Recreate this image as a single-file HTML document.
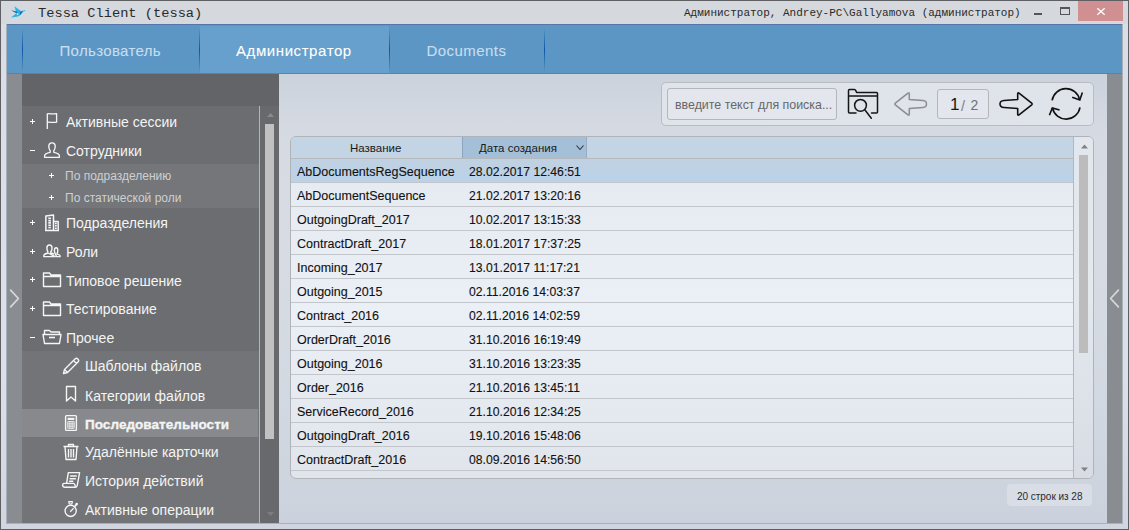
<!DOCTYPE html>
<html><head><meta charset="utf-8">
<style>
*{margin:0;padding:0;box-sizing:border-box}
html,body{width:1129px;height:530px;overflow:hidden}
body{position:relative;background:#d3d7de;font-family:"Liberation Sans",sans-serif}
.a{position:absolute}
.t{position:absolute;white-space:pre;line-height:1}
#frame{left:0;top:0;width:1129px;height:530px;border:1px solid #5f6064;background:linear-gradient(#d8dde7,#dbe0ea 70%,#d0d5df)}
#titlebar{left:1px;top:1px;width:1127px;height:23px;background:#d5d8dc}
#tabs{left:7px;top:24px;width:1115px;height:50px;background:#5b96c4;border-top:1px solid #5576a6}
.tab{position:absolute;top:1px;height:48px;color:#fff;font-size:15.6px}
.sep{position:absolute;top:3px;width:1px;height:44px;background:linear-gradient(rgba(16,90,170,0),#0b58a6 50%,rgba(16,90,170,0))}
#leftstrip{left:7px;top:74px;width:15px;height:449px;background:#898c90}
#rightstrip{left:1107px;top:74px;width:15px;height:449px;background:#898c90}
#sidebar{left:22px;top:74px;width:257px;height:449px;background:#6b6d70}
#sbhead{left:22px;top:74px;width:257px;height:32px;background:#636467}
#main{left:279px;top:74px;width:828px;height:449px;background:linear-gradient(#ccd2dc 0%,#d6dbe3 14%,#d7dce4 40%,#d2d8e1 75%,#ccd2dd 100%)}
.item{position:absolute;left:22px;width:236px;height:29px}
.lbl{position:absolute;color:#f4f4f4;font-size:14px;white-space:pre;line-height:1}
.pm{position:absolute;color:#f0f0f0;font-size:12px;line-height:1}
svg{position:absolute;overflow:visible}
.row{position:absolute;left:291px;width:782px;height:24px;border-bottom:1px solid #c2c5ca;background:#e7ebf2}
#tabs::after{content:"";position:absolute;left:0;top:48px;width:1115px;height:1px;background:#5484b0}
.c1{position:absolute;left:6px;top:6.5px;font-size:12.5px;color:#111;-webkit-text-stroke:0.1px #111;white-space:pre;line-height:1}
.c2{position:absolute;left:178px;top:6.5px;font-size:12.2px;color:#111;-webkit-text-stroke:0.1px #111;white-space:pre;line-height:1}
</style></head><body>
<div id="frame" class="a"></div>
<div id="titlebar" class="a"></div>
<div class="a" style="left:6px;top:24px;width:1117px;height:500px;border:1px solid #aab0b7;border-top:none"></div>
<!-- bird icon -->
<svg style="left:8px;top:3px" width="20" height="18" viewBox="0 0 20 18">
<path d="M6.4 3.2 L12.6 7.8 L11.4 12.6 L8.2 9.2 Z" fill="#2bb3e6"/>
<path d="M3 7.2 L9.2 8.4 L9.6 11 Z" fill="#1f6fb0"/>
<path d="M11.5 8.6 L15.6 7.6 L17.3 7 L17.1 7.9 L15.2 8.4 L11.5 13 Z" fill="#2bb3e6"/>
<path d="M12.4 8.5 L15.3 8.2 L11.4 12.8 Z" fill="#1a6aad"/>
<path d="M8.9 9.8 L11.4 12.8 L10 13.4 L3 14.6 Z" fill="#2ab0e4"/>
<circle cx="9.5" cy="11.1" r="0.8" fill="#e8f6fd"/>
</svg>
<div class="t" style="left:38px;top:6.5px;font-family:'Liberation Mono',monospace;font-size:13.7px;color:#2a2a2a">Tessa Client (tessa)</div>
<div class="t" style="left:684px;top:7.8px;font-family:'Liberation Mono',monospace;font-size:11px;color:#2a2a2a">Администратор, Andrey-PC\Gallyamova (администратор)</div>
<!-- window controls -->
<div class="a" style="left:1034px;top:13px;width:8px;height:2px;background:#555"></div>
<div class="a" style="left:1060px;top:7px;width:10px;height:8px;border:1px solid #555;border-top-width:2px"></div>
<div class="a" style="left:1078px;top:1px;width:45px;height:20px;background:#d08f91"></div>
<svg style="left:1097px;top:8px" width="8" height="7" viewBox="0 0 8 7"><path d="M0.3 0.2 L7.7 6.8 M7.7 0.2 L0.3 6.8" stroke="#fff" stroke-width="1.3"/></svg>

<div id="tabs" class="a">
  <div class="sep" style="left:15px"></div>
  <div class="a" style="left:193px;top:1px;width:189px;height:48px;background:#67a0cc"></div>
  <div class="sep" style="left:192px"></div>
  <div class="sep" style="left:382px"></div>
  <div class="sep" style="left:537px"></div>
  <div class="t" style="left:52.5px;top:17.6px;font-size:15px;letter-spacing:0.34px;color:#c8def0;-webkit-text-stroke:0.1px #c8def0">Пользователь</div>
  <div class="t" style="left:229px;top:17.6px;font-size:15px;letter-spacing:0.58px;color:#ffffff;-webkit-text-stroke:0.08px #fff">Администратор</div>
  <div class="t" style="left:419.5px;top:17.6px;font-size:15px;letter-spacing:0.45px;color:#c8def0;-webkit-text-stroke:0.1px #c8def0">Documents</div>
</div>

<div id="leftstrip" class="a"></div>
<svg style="left:9px;top:289px" width="11" height="20" viewBox="0 0 11 20"><path d="M1.6 1.2 L9.4 9.5 L1.6 17.8" stroke="#d6d8db" stroke-width="1.7" stroke-linecap="round" stroke-linejoin="round" fill="none"/></svg>
<div id="rightstrip" class="a"></div>
<svg style="left:1109px;top:289px" width="11" height="20" viewBox="0 0 11 20"><path d="M9.4 1.2 L1.6 9.5 L9.4 17.8" stroke="#d6d8db" stroke-width="1.7" stroke-linecap="round" stroke-linejoin="round" fill="none"/></svg>

<div id="sidebar" class="a"></div>
<div id="sbhead" class="a"></div>
<div class="a" style="left:22px;top:164px;width:237px;height:44px;background:#747679"></div>
<div class="a" style="left:22px;top:351px;width:237px;height:172px;background:#727477"></div>
<div class="a" style="left:22px;top:409px;width:236px;height:28px;background:#87898c"></div>
<div class="a" style="left:259px;top:106px;width:1px;height:417px;background:#b4b5b7"></div>
<div class="a" style="left:260px;top:106px;width:19px;height:417px;background:#68696c"></div>
<div class="a" style="left:265px;top:124px;width:9px;height:315px;background:#c1c1c1"></div>
<svg style="left:267px;top:113px" width="7" height="4" viewBox="0 0 7 4"><path d="M0 4 L3.5 0 L7 4 Z" fill="#8a8b8d"/></svg>
<svg style="left:267px;top:512px" width="7" height="4" viewBox="0 0 7 4"><path d="M0 0 L3.5 4 L7 0 Z" fill="#7d7e80"/></svg>

<!-- sidebar labels -->
<div class="lbl" style="left:66px;top:115px">Активные сессии</div>
<div class="lbl" style="left:66px;top:144px">Сотрудники</div>
<div class="lbl" style="left:65px;top:170px;font-size:12px;color:#cfd0d2">По подразделению</div>
<div class="lbl" style="left:65px;top:192px;font-size:12px;color:#cfd0d2">По статической роли</div>
<div class="lbl" style="left:66px;top:216px">Подразделения</div>
<div class="lbl" style="left:66px;top:245px">Роли</div>
<div class="lbl" style="left:66px;top:274px">Типовое решение</div>
<div class="lbl" style="left:66px;top:302px">Тестирование</div>
<div class="lbl" style="left:66px;top:331px">Прочее</div>
<div class="lbl" style="left:85px;top:359px">Шаблоны файлов</div>
<div class="lbl" style="left:85px;top:388.5px">Категории файлов</div>
<div class="lbl" style="left:85px;top:418px;font-weight:bold;font-size:13.5px;letter-spacing:0.05px;-webkit-text-stroke:0.35px #f4f4f4">Последовательности</div>
<div class="lbl" style="left:85px;top:445px">Удалённые карточки</div>
<div class="lbl" style="left:85px;top:474px">История действий</div>
<div class="lbl" style="left:85px;top:503px">Активные операции</div>

<!-- plus/minus -->
<div class="a" style="left:30px;top:121px;width:5px;height:1px;background:#fff"></div><div class="a" style="left:32px;top:119px;width:1px;height:5px;background:#fff"></div>
<div class="a" style="left:30px;top:150px;width:5px;height:1px;background:#fff"></div>
<div class="a" style="left:49px;top:175px;width:5px;height:1px;background:#fff"></div><div class="a" style="left:51px;top:173px;width:1px;height:5px;background:#fff"></div>
<div class="a" style="left:49px;top:197px;width:5px;height:1px;background:#fff"></div><div class="a" style="left:51px;top:195px;width:1px;height:5px;background:#fff"></div>
<div class="a" style="left:30px;top:222px;width:5px;height:1px;background:#fff"></div><div class="a" style="left:32px;top:220px;width:1px;height:5px;background:#fff"></div>
<div class="a" style="left:30px;top:251px;width:5px;height:1px;background:#fff"></div><div class="a" style="left:32px;top:249px;width:1px;height:5px;background:#fff"></div>
<div class="a" style="left:30px;top:279px;width:5px;height:1px;background:#fff"></div><div class="a" style="left:32px;top:277px;width:1px;height:5px;background:#fff"></div>
<div class="a" style="left:30px;top:308px;width:5px;height:1px;background:#fff"></div><div class="a" style="left:32px;top:306px;width:1px;height:5px;background:#fff"></div>
<div class="a" style="left:30px;top:337px;width:5px;height:1px;background:#fff"></div>
<!-- flag -->
<svg style="left:44px;top:112px" width="16" height="18" viewBox="0 0 16 18" fill="none" stroke="#f6f6f6" stroke-width="1.3" stroke-linejoin="round">
<path d="M3.3 17 V1.8 C6 1.2 8 2.6 12.6 1.6 V10.2 C8.5 11 6 9.8 3.3 10.3"/></svg>
<!-- person -->
<svg style="left:43px;top:141px" width="18" height="18" viewBox="0 0 18 18" fill="none" stroke="#f6f6f6" stroke-width="1.35" stroke-linejoin="round">
<path d="M9 1.8 C6.7 1.8 5.6 3.6 5.8 6 C6 7.8 6.6 9.1 7.3 10 L7.1 11.4 C4.2 12 1.7 13 1.6 14.8 V16.3 H16.4 V14.8 C16.3 13 13.8 12 10.9 11.4 L10.7 10 C11.4 9.1 12 7.8 12.2 6 C12.4 3.6 11.3 1.8 9 1.8 Z"/></svg>
<!-- building -->
<svg style="left:42px;top:212px" width="20" height="22" viewBox="0 0 20 22" fill="none" stroke="#f6f6f6" stroke-width="1.5" stroke-linejoin="round">
<path d="M3.85 18.6 V4.1 L11.5 3.1 V18.6 Z M11.5 9.6 H16.2 V18.6 H11.5 M3 18.6 H17"/>
<path d="M7.6 5.5 V17.2" stroke-width="2.6" stroke-dasharray="1.6 0.7"/>
<path d="M13.85 10.8 V17.2" stroke-width="1.8" stroke-dasharray="1.5 0.8"/></svg>
<!-- roles -->
<svg style="left:40px;top:240px" width="24" height="22" viewBox="0 0 24 22" fill="none" stroke="#f6f6f6" stroke-width="1.4" stroke-linejoin="round">
<path d="M8.2 12 C7.3 11 6.9 9.6 6.9 8 C6.9 6 7.9 5 9.45 5 C11 5 12 6 12 8 C12 9.6 11.6 11 10.7 12 L10.8 13 C12 13.3 13.2 13.7 14.1 14.2 M15.2 16.65 H3.85 V15.5 C3.9 14.3 6 13.5 8.1 13 Z"/>
<path d="M15.2 13.5 C14.7 12.8 14.4 11.8 14.4 10.5 C14.4 8.8 15.1 7.75 16.1 7.75 C17.1 7.75 17.8 8.8 17.8 10.5 C17.8 11.8 17.5 12.8 17 13.5 L17.1 14.1 C18.8 14.5 20 15 20.05 15.8 V16.65 H16.3 C16.2 15.2 15.6 14.3 15.1 14 Z"/></svg>
<!-- folders -->
<svg style="left:42px;top:271px" width="20" height="17" viewBox="0 0 20 17" fill="none" stroke="#f6f6f6" stroke-width="1.4" stroke-linejoin="round">
<path d="M1.5 15.5 V2 H7.5 L9 4 H18.5 V15.5 Z M1.5 5.5 H18.5"/></svg>
<svg style="left:42px;top:300px" width="20" height="17" viewBox="0 0 20 17" fill="none" stroke="#f6f6f6" stroke-width="1.4" stroke-linejoin="round">
<path d="M1.5 15.5 V2 H7.5 L9 4 H18.5 V15.5 Z M1.5 5.5 H18.5"/></svg>
<svg style="left:42px;top:329px" width="20" height="16" viewBox="0 0 20 16" fill="none" stroke="#f6f6f6" stroke-width="1.4" stroke-linejoin="round">
<path d="M2.5 5 V1.5 H7.5 L9 3 H17.5 V5 M1 5.5 H19 L17.5 14.5 H2.5 Z"/><path d="M7 8.5 H13" stroke-width="1.6"/></svg>
<!-- pencil -->
<svg style="left:62px;top:357px" width="18" height="18" viewBox="0 0 18 18" fill="none" stroke="#f6f6f6" stroke-width="1.4" stroke-linejoin="round">
<path d="M1.5 16.5 L2.5 12.5 L13 2 C13.8 1.2 15 1.2 15.8 2 L16 2.2 C16.8 3 16.8 4.2 16 5 L5.5 15.5 Z M11.5 3.5 L14.5 6.5 M2.5 12.5 L5.5 15.5"/></svg>
<!-- bookmark -->
<svg style="left:65px;top:385px" width="12" height="18" viewBox="0 0 12 18" fill="none" stroke="#f6f6f6" stroke-width="1.4" stroke-linejoin="round">
<path d="M1.5 1.5 H10.5 V16 L6 12 L1.5 16 Z"/></svg>
<!-- calculator -->
<svg style="left:64px;top:414px" width="14" height="18" viewBox="0 0 14 18" fill="none" stroke="#f6f6f6" stroke-width="1.4" stroke-linejoin="round">
<rect x="1.6" y="1.6" width="10.8" height="14.8" rx="1"/><path d="M3.6 4.9 H10.4" stroke-width="2.1"/>
<path d="M3.8 7.6 H10.2 V14.3 H3.8 Z M3.8 9.9 H10.2 M3.8 12.1 H10.2 M5.9 7.6 V14.3 M8.1 7.6 V14.3" stroke-width="0.9"/></svg>
<!-- trash -->
<svg style="left:62px;top:443px" width="18" height="18" viewBox="0 0 18 18" fill="none" stroke="#f6f6f6" stroke-width="1.4" stroke-linejoin="round">
<path d="M1.5 3.5 H16.5 M6.5 3.5 V1.5 H11.5 V3.5 M3 3.5 L4 16.5 H14 L15 3.5 M6.5 6 V14.5 M9 6 V14.5 M11.5 6 V14.5"/></svg>
<!-- history scroll -->
<svg style="left:58px;top:468px" width="26" height="24" viewBox="0 0 26 24" fill="none" stroke="#f6f6f6" stroke-width="1.4" stroke-linejoin="round" stroke-linecap="round">
<path d="M8.6 15.4 L10.3 4.6 H21.6 L19.2 17.6 C18.9 18.8 18.2 19.3 17.2 19.3 H7.2 C5.6 19.3 4.6 18.3 4.6 17 C4.6 16 5.2 15.4 6.2 15.4 H15.3 C16.1 15.4 16.7 16.1 17 17.1 L17.6 19.2"/>
<path d="M12.6 8 H18.3 M12.1 10.7 H17.4 M11.6 13.3 H14.8"/></svg>
<!-- stopwatch -->
<svg style="left:63px;top:500px" width="17" height="18" viewBox="0 0 17 18" fill="none" stroke="#f6f6f6" stroke-width="1.4" stroke-linejoin="round">
<circle cx="7.65" cy="10.85" r="5.6"/><path d="M5.7 1.6 H9.4 L8.8 4 H6.3 Z" stroke-width="1.2"/><path d="M11.6 6.6 L13.4 4.6" stroke-width="1.6"/><circle cx="13.7" cy="4.1" r="1.3" fill="#f6f6f6" stroke="none"/><path d="M7.2 11.7 L10.6 8.3" stroke-width="1.3"/></svg>
<div id="main" class="a"></div>

<!-- toolbar -->
<div class="a" style="left:661px;top:82px;width:433px;height:44px;border:1px solid #b9bcc1;border-radius:5px;background:#dfe3ea"></div>
<div class="a" style="left:667px;top:88px;width:170px;height:32px;border:1px solid #b3b6ba;border-radius:3px;background:#e3e6ec"></div>
<div class="t" style="left:675px;top:98.8px;font-size:12.4px;color:#66686c">введите текст для поиска...</div>
<div class="a" style="left:937px;top:89px;width:52px;height:30px;border:1px solid #b3b6ba;border-radius:3px;background:#e3e6ec"></div>
<div class="t" style="left:950px;top:96px;font-size:17px;color:#1a1a1a">1</div>
<div class="t" style="left:961px;top:98.5px;font-size:14.5px;color:#808286">/</div><div class="t" style="left:970.5px;top:98px;font-size:14px;color:#6f7174">2</div>
<!-- table -->
<div class="a" style="left:290px;top:136px;width:804px;height:343px;border:1px solid #b0b3b8;border-radius:6px;background:linear-gradient(#e5e9f0 0%,#e8ecf3 30%,#ebeff6 50%,#e6eaf1 75%,#e0e4eb 100%);overflow:hidden">
  <div class="a" style="left:0;top:0;width:782px;height:22px;background:#c3d4e4;border-bottom:1px solid #b5b8bd"></div>
  <div class="a" style="left:171px;top:0;width:125px;height:21px;background:#a4c0d9;border-left:1px solid #8aa5bf;border-right:1px solid #95aec6"></div>
  <div class="a" style="left:782px;top:0;width:1px;height:341px;background:#b4b7bb"></div>
  <div class="a" style="left:783px;top:0;width:19px;height:341px;background:linear-gradient(#e2e6ed,#e4e8ef 45%,#d8dde5)"></div>
</div>
<div class="t" style="left:350px;top:143px;font-size:11.5px;color:#1a1a1a">Название</div>
<div class="t" style="left:479px;top:143px;font-size:11.5px;color:#1a1a1a">Дата создания</div>
<svg style="left:576px;top:144.5px" width="8" height="6" viewBox="0 0 8 6"><path d="M0.5 0.5 L4 4.5 L7.5 0.5" stroke="#333" stroke-width="1.1" fill="none"/></svg>
<div class="a" style="left:1079px;top:155px;width:9px;height:198px;background:#bcbcbc"></div>
<svg style="left:1081px;top:144px" width="7" height="5" viewBox="0 0 7 5"><path d="M0 4.5 L3.5 0.5 L7 4.5 Z" fill="#808184"/></svg>
<svg style="left:1081px;top:467px" width="7" height="5" viewBox="0 0 7 5"><path d="M0 0.5 L3.5 4.5 L7 0.5 Z" fill="#808184"/></svg>

<div class="row" style="top:159px;background:linear-gradient(#c0d1e1,#bad2e8)"><div class="c1">AbDocumentsRegSequence</div><div class="c2">28.02.2017 12:46:51</div></div>
<div class="row" style="top:183px;background:transparent"><div class="c1">AbDocumentSequence</div><div class="c2">21.02.2017 13:20:16</div></div>
<div class="row" style="top:207px;background:transparent"><div class="c1">OutgoingDraft_2017</div><div class="c2">10.02.2017 13:15:33</div></div>
<div class="row" style="top:231px;background:transparent"><div class="c1">ContractDraft_2017</div><div class="c2">18.01.2017 17:37:25</div></div>
<div class="row" style="top:255px;background:transparent"><div class="c1">Incoming_2017</div><div class="c2">13.01.2017 11:17:21</div></div>
<div class="row" style="top:279px;background:transparent"><div class="c1">Outgoing_2015</div><div class="c2">02.11.2016 14:03:37</div></div>
<div class="row" style="top:303px;background:transparent"><div class="c1">Contract_2016</div><div class="c2">02.11.2016 14:02:59</div></div>
<div class="row" style="top:327px;background:transparent"><div class="c1">OrderDraft_2016</div><div class="c2">31.10.2016 16:19:49</div></div>
<div class="row" style="top:351px;background:transparent"><div class="c1">Outgoing_2016</div><div class="c2">31.10.2016 13:23:35</div></div>
<div class="row" style="top:375px;background:transparent"><div class="c1">Order_2016</div><div class="c2">21.10.2016 13:45:11</div></div>
<div class="row" style="top:399px;background:transparent"><div class="c1">ServiceRecord_2016</div><div class="c2">21.10.2016 12:34:25</div></div>
<div class="row" style="top:423px;background:transparent"><div class="c1">OutgoingDraft_2016</div><div class="c2">19.10.2016 15:48:06</div></div>
<div class="row" style="top:447px;background:transparent"><div class="c1">ContractDraft_2016</div><div class="c2">08.09.2016 14:56:50</div></div>
<div class="a" style="left:1007px;top:484px;width:85px;height:22px;border-radius:4px;background:#d8dde6"></div>
<div class="t" style="left:1017px;top:491.6px;font-size:10px;letter-spacing:-0.03px;color:#2a2a2a">20 строк из 28</div>

<!-- toolbar icons -->
<svg style="left:847px;top:88px" width="32" height="32" viewBox="0 0 32 32" fill="none" stroke="#151515" stroke-width="1.5" stroke-linejoin="round" stroke-linecap="round">
<path d="M9 25 H2.5 C1.9 25 1.5 24.6 1.5 24 V2.5 C1.5 1.9 1.9 1.5 2.5 1.5 H7.5 C8.2 1.5 8.5 2 8.8 2.6 L9.6 4.5 H29.5 C30.1 4.5 30.5 4.9 30.5 5.5 V24 C30.5 24.6 30.1 25 29.5 25 H24.5 M1.5 8 H30.5"/>
<circle cx="13.5" cy="17.3" r="5.9"/><path d="M17.8 21.8 L24.3 30.3"/></svg>
<svg style="left:893px;top:91px" width="35" height="26" viewBox="0 0 35 26" fill="none" stroke="#8c8d90" stroke-width="1.5" stroke-linejoin="round">
<path d="M2.3 12.2 L15 2.2 C15.8 1.6 16.3 2 16.3 2.8 V8.5 L30 9.5 C32.5 9.7 33.5 11.3 33.5 13 C33.5 14.7 32.5 16.3 30 16.5 L16.3 17.5 V23.2 C16.3 24 15.8 24.4 15 23.8 L2.3 13.8 C1.7 13.3 1.7 12.7 2.3 12.2 Z"/></svg>
<svg style="left:998px;top:91px" width="36" height="26" viewBox="0 0 36 26" fill="none" stroke="#111" stroke-width="1.6" stroke-linejoin="round">
<path d="M33.7 12.2 L21 2.2 C20.2 1.6 19.7 2 19.7 2.8 V8.5 L6 9.5 C3.5 9.7 2 11.3 2 13 C2 14.7 3.5 16.3 6 16.5 L19.7 17.5 V23.2 C19.7 24 20.2 24.4 21 23.8 L33.7 13.8 C34.3 13.3 34.3 12.7 33.7 12.2 Z"/></svg>
<svg style="left:1045px;top:86px" width="40" height="36" viewBox="0 0 40 36" fill="none" stroke="#111" stroke-width="1.6" stroke-linejoin="miter">
<path d="M7.1 14.3 A14 14 0 0 1 34.6 13.8"/>
<path d="M37.4 6.5 L34.8 14 L27.2 11.2"/>
<path d="M35 21.4 A14 14 0 0 1 7.5 22"/>
<path d="M4.4 29.2 L7.3 22 L14.6 24.1"/></svg>

</body></html>
